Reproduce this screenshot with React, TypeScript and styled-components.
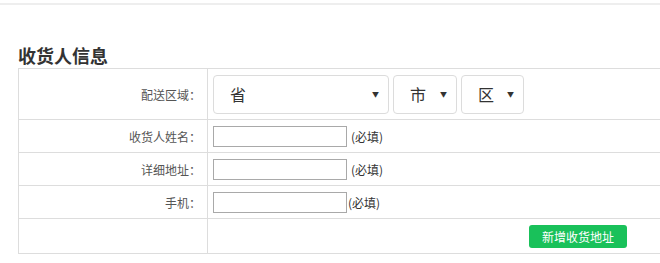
import React from 'react';
import styled, { createGlobalStyle } from 'styled-components';

const GlobalStyle = createGlobalStyle`
    html, body {
        margin: 0;
        padding: 0;
        background: #fff;
        overflow: hidden;
    }
    body {
        font-family: "Noto Sans CJK SC", "Liberation Sans", sans-serif;
        color: #333;
    }
`;

const Page = styled.div`
    width: 660px;
    height: 263px;
    overflow: hidden;
`;

const TopLine = styled.div`
    margin-top: 3px;
    height: 2px;
    background: #eeeeee;
`;

const Title = styled.h2`
    margin: 38px 0 1px 18px;
    font-size: 18px;
    line-height: 24px;
    font-weight: 700;
    color: #333;
`;

const Table = styled.div`
    margin-left: 18px;
    width: 760px;
    display: grid;
    grid-template-columns: 189px 1fr;
    border-top: 1px solid #ddd;
    border-left: 1px solid #ddd;
`;

interface CellProps {
    h: number
}

const Label = styled.div<CellProps>`
    height: ${({ h }) => h}px;
    box-sizing: border-box;
    display: flex;
    align-items: center;
    justify-content: flex-end;
    padding-right: 6px;
    border-right: 1px solid #ddd;
    border-bottom: 1px solid #ddd;
    font-size: 12px;
    color: #555;
`;

const Field = styled.div<CellProps>`
    height: ${({ h }) => h}px;
    box-sizing: border-box;
    display: flex;
    align-items: center;
    padding-left: 5px;
    border-right: 1px solid #ddd;
    border-bottom: 1px solid #ddd;
`;

interface SelectProps {
    w: number
}

const Select = styled.div<SelectProps>`
    width: ${({ w }) => w}px;
    height: 39px;
    box-sizing: border-box;
    margin-right: 4px;
    padding: 0 9px 0 16px;
    display: flex;
    align-items: center;
    justify-content: space-between;
    border: 1px solid #dcdcdc;
    border-radius: 4px;
    font-size: 16px;
    color: #333;
`;

const Arrow = styled.span`
    font-size: 7px;
    color: #333;
`;

const Input = styled.input`
    width: 134px;
    height: 21px;
    box-sizing: border-box;
    margin: 0;
    border: 1px solid #a9a9a9;
    padding: 0 3px;
    font-size: 12px;
`;

interface HintProps {
    gap: number
}

const Hint = styled.span<HintProps>`
    margin-left: ${({ gap }) => gap}px;
    font-size: 12px;
    color: #333;
`;

const AddButton = styled.button`
    margin-left: 316px;
    width: 98px;
    height: 23px;
    padding: 0;
    border: none;
    border-radius: 3px;
    background: #19c15a;
    color: #fff;
    font-family: inherit;
    font-size: 12px;
    cursor: pointer;
`;

const App = () => {
    return (
        <Page>
            <GlobalStyle />
            <TopLine />
            <Title>收货人信息</Title>
            <Table>
                <Label h={51}>配送区域：</Label>
                <Field h={51}>
                    <Select w={176}>省<Arrow>▼</Arrow></Select>
                    <Select w={64}>市<Arrow>▼</Arrow></Select>
                    <Select w={63}>区<Arrow>▼</Arrow></Select>
                </Field>

                <Label h={33}>收货人姓名：</Label>
                <Field h={33}>
                    <Input />
                    <Hint gap={4}>(必填)</Hint>
                </Field>

                <Label h={33}>详细地址：</Label>
                <Field h={33}>
                    <Input />
                    <Hint gap={4}>(必填)</Hint>
                </Field>

                <Label h={33}>手机：</Label>
                <Field h={33}>
                    <Input />
                    <Hint gap={1}>(必填)</Hint>
                </Field>

                <Label h={35} />
                <Field h={35}>
                    <AddButton>新增收货地址</AddButton>
                </Field>
            </Table>
        </Page>
    );
};

export default App;
